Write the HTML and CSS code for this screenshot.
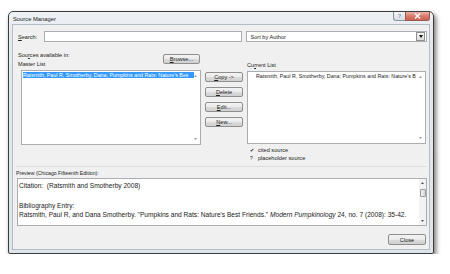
FILE: index.html
```html
<!DOCTYPE html>
<html lang="en">
<head>
    <meta charset="UTF-8">
    <title>Source Manager</title>
    <link rel="stylesheet" href="styles.css">
</head>
<body>
    <div class="window">
        <div class="titlebar">
            <span class="title">Source Manager</span>
            <div class="caption-buttons">
                <span class="cap-help">?</span>
                <span class="cap-close">
                    <svg width="7" height="6" viewBox="0 0 7 6"><path d="M1 0.5 L6 5.5 M6 0.5 L1 5.5" stroke="#fff" stroke-width="1.4"/></svg>
                </span>
            </div>
        </div>
        <div class="panel">
            <div class="search-row">
                <label class="search-label" for="search"><u>S</u>earch:</label>
                <input class="search-input" id="search" type="text">
                <div class="select">
                    <span>Sort by Author</span>
                    <span class="select-arrow">
                        <svg width="4" height="3" viewBox="0 0 4 3"><path d="M0 0 H4 L2 3 Z" fill="#111"/></svg>
                    </span>
                </div>
            </div>

            <div class="lists">
                <div class="col-left">
                    <div class="col-head">
                        <div class="head-labels">
                            <div>Sou<u>r</u>ces available in:</div>
                            <div>Master List</div>
                        </div>
                        <button class="btn browse"><u>B</u>rowse...</button>
                    </div>
                    <div class="listbox master">
                        <div class="row selected">Ratsmith, Paul R, Smotherby, Dana; Pumpkins and Rats: Nature's Bes</div>
                        <svg class="arrow up" width="3" height="2" viewBox="0 0 3 2"><path d="M0 2 H3 L1.5 0 Z" fill="#999"/></svg>
                        <svg class="arrow down" width="3" height="2" viewBox="0 0 3 2"><path d="M0 0 H3 L1.5 2 Z" fill="#999"/></svg>
                    </div>
                </div>

                <div class="col-buttons">
                    <button class="btn"><u>C</u>opy -&gt;</button>
                    <button class="btn"><u>D</u>elete</button>
                    <button class="btn"><u>E</u>dit...</button>
                    <button class="btn"><u>N</u>ew...</button>
                </div>

                <div class="col-right">
                    <div class="right-head">Cu<u>r</u>rent List</div>
                    <div class="listbox current">
                        <div class="row indent">Ratsmith, Paul R, Smotherby, Dana; Pumpkins and Rats: Nature's B</div>
                        <svg class="arrow up" width="3" height="2" viewBox="0 0 3 2"><path d="M0 2 H3 L1.5 0 Z" fill="#999"/></svg>
                        <svg class="arrow down" width="3" height="2" viewBox="0 0 3 2"><path d="M0 0 H3 L1.5 2 Z" fill="#999"/></svg>
                    </div>
                    <div class="legend">
                        <div><span class="mark">&#10004;</span>cited source</div>
                        <div><span class="mark">?</span>placeholder source</div>
                    </div>
                </div>
            </div>

            <div class="separator"></div>

            <div class="preview-label">Preview (Chicago Fifteenth Edition):</div>
            <div class="preview">
                <div class="preview-text">
                    <p>Citation:&nbsp; (Ratsmith and Smotherby 2008)</p>
                    <p class="gap">Bibliography Entry:</p>
                    <p>Ratsmith, Paul R, and Dana Smotherby. "Pumpkins and Rats: Nature's Best Friends." <i>Modern Pumpkinology</i> 24, no. 7 (2008): 35-42.</p>
                </div>
                <div class="scrollbar">
                    <svg class="sb-arrow" width="3" height="2" viewBox="0 0 3 2"><path d="M0 2 H3 L1.5 0 Z" fill="#555"/></svg>
                    <span class="sb-thumb"></span>
                    <span class="sb-track"></span>
                    <svg class="sb-arrow" width="3" height="2" viewBox="0 0 3 2"><path d="M0 0 H3 L1.5 2 Z" fill="#555"/></svg>
                </div>
            </div>

            <div class="footer">
                <button class="btn close">Close</button>
            </div>
        </div>
    </div>
</body>
</html>
```

FILE: styles.css
```css
body {
    margin: 0;
    background-color: #fff;
    font-family: "Liberation Sans", Arial, sans-serif;
    font-size: 5.6px;
    color: #222;
}
.window {
    box-sizing: border-box;
    width: 426px;
    height: 243px;
    margin: 11px 0 0 8px;
    padding: 0 3px 3px 3px;
    display: flex;
    flex-direction: column;
    background: linear-gradient(#eef1f5, #e3e8ee 30px, #dfe4ea);
    border: 1px solid #3d3d3d;
    border-radius: 5px 5px 2px 2px;
    box-shadow: 2px 3px 5px rgba(0, 0, 0, 0.55);
}
.titlebar {
    height: 13px;
    display: flex;
    align-items: flex-start;
    justify-content: space-between;
}
.title {
    font-size: 5.8px;
    margin: 4px 0 0 1px;
    color: #1a1a1a;
}
.caption-buttons {
    display: flex;
}
.cap-help,
.cap-close {
    height: 8px;
    display: flex;
    align-items: center;
    justify-content: center;
    border: 1px solid #8a94a0;
    border-top: none;
}
.cap-help {
    width: 11px;
    font-size: 5px;
    font-weight: bold;
    color: #7c8794;
    background: linear-gradient(#f2f4f7, #d6dce3);
    border-radius: 0 0 0 3px;
    border-right: none;
}
.cap-close {
    width: 23px;
    background: linear-gradient(#e9b3a8, #d9786a 55%, #cd6252);
    border-color: #9a5a50;
    border-radius: 0 0 3px 0;
}
.panel {
    flex: 1;
    background-color: #f0f0f0;
    border: 1px solid #b4bcc6;
    padding: 6px 2px 4px 5px;
    display: flex;
    flex-direction: column;
}
.search-row {
    display: flex;
    height: 11px;
    align-items: center;
}
.search-label {
    width: 26px;
}
.search-input {
    box-sizing: border-box;
    width: 199px;
    height: 11px;
    margin: 0;
    border: 1px solid #abadb3;
    background: #fff;
}
.select {
    box-sizing: border-box;
    width: 181px;
    height: 11px;
    margin-left: 4px;
    border: 1px solid #abadb3;
    background: #fff;
    display: flex;
    align-items: center;
    justify-content: space-between;
    padding-left: 3px;
}
.select-arrow {
    width: 7px;
    height: 7px;
    margin-right: 1px;
    display: flex;
    align-items: center;
    justify-content: center;
    border: 1px solid #8e8f8f;
    background: linear-gradient(#f6f6f6, #dcdcdc);
}
.lists {
    display: grid;
    grid-template-columns: 180px 38px 179px;
    column-gap: 4px;
    margin: 9px 0 0 3px;
}
.col-head {
    height: 19px;
    display: flex;
    justify-content: space-between;
    align-items: flex-start;
}
.head-labels {
    margin-left: -3px;
    line-height: 9px;
}
.browse {
    width: 37px;
    height: 11px;
    margin: 3px 1px 0 0;
}
.listbox {
    position: relative;
    box-sizing: border-box;
    background: #fff;
    border: 1px solid #abadb3;
}
.master {
    height: 75px;
}
.current {
    height: 73px;
    margin-top: 1px;
}
.row {
    width: 171px;
    height: 6px;
    line-height: 6px;
    margin: 1px 0 0 1px;
    font-size: 5.3px;
    white-space: nowrap;
    overflow: hidden;
}
.selected {
    background-color: #3399ff;
    color: #fff;
}
.indent {
    padding-left: 7px;
    box-sizing: border-box;
}
.arrow {
    position: absolute;
    right: 3px;
}
.arrow.up {
    top: 4px;
}
.arrow.down {
    bottom: 4px;
}
.col-buttons {
    padding-top: 21px;
    display: flex;
    flex-direction: column;
    gap: 5px;
}
.btn {
    box-sizing: border-box;
    height: 10px;
    padding: 0;
    font-family: inherit;
    font-size: 5.6px;
    color: #222;
    background: linear-gradient(#f3f3f3, #ebebeb 50%, #dddddd 51%, #cfcfcf);
    border: 1px solid #8f8f8f;
    border-radius: 2px;
}
.right-head {
    height: 19px;
    box-sizing: border-box;
    padding-top: 10px;
    line-height: 9px;
}
.legend {
    margin: 2px 0 0 3px;
    line-height: 8px;
}
.mark {
    display: inline-block;
    width: 8px;
    font-size: 5px;
}
.separator {
    height: 1px;
    margin: 4px 0 0 -2px;
    background-color: #dedede;
}
.preview-label {
    line-height: 8px;
    margin: 2px 0 0 -2px;
    font-size: 5.2px;
}
.preview {
    box-sizing: border-box;
    display: flex;
    height: 48px;
    width: 410px;
    margin: 1px 0 0 -1px;
    background: #fff;
    border: 1px solid #abadb3;
}
.preview-text {
    flex: 1;
    padding: 2px 0 0 1px;
    font-size: 6.6px;
    line-height: 9px;
    white-space: nowrap;
    overflow: hidden;
}
.preview-text p {
    margin: 0;
}
.preview-text .gap {
    margin-top: 11px;
}
.scrollbar {
    width: 7px;
    display: flex;
    flex-direction: column;
    align-items: center;
    background: #f2f2f2;
}
.sb-arrow {
    margin: 3px 0;
}
.sb-thumb {
    box-sizing: border-box;
    width: 6px;
    height: 8px;
    margin-top: 2px;
    border: 1px solid #9a9a9a;
    border-radius: 1px;
    background: linear-gradient(90deg, #f3f3f3, #d6d6d6);
}
.sb-track {
    flex: 1;
}
.footer {
    display: flex;
    justify-content: flex-end;
    margin-top: 8px;
    padding-right: 1px;
}
.close {
    width: 38px;
    height: 11px;
}
```
